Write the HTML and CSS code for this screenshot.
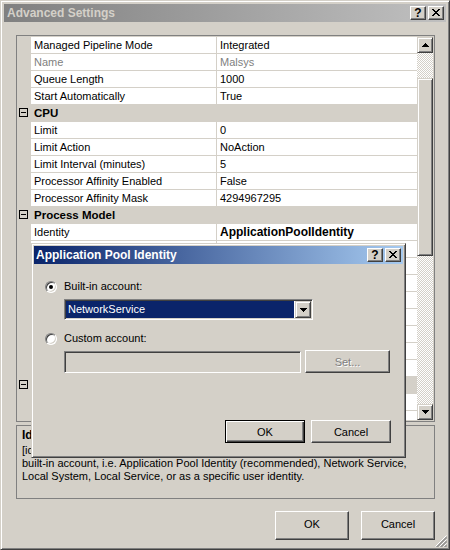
FILE: index.html
```html
<!DOCTYPE html>
<html>
<head>
<meta charset="utf-8">
<title>Advanced Settings</title>
<link rel="stylesheet" href="styles.css">
</head>
<body>
<div class="window">
  <div class="titlebar inactive">
    <span class="title">Advanced Settings</span>
    <div class="caption-btns">
      <span class="cbtn q">?</span>
      <span class="cbtn"><svg width="8" height="7" viewBox="0 0 8 7"><rect x="0" y="0" width="2" height="1"/><rect x="6" y="0" width="2" height="1"/><rect x="1" y="1" width="2" height="1"/><rect x="5" y="1" width="2" height="1"/><rect x="2" y="2" width="4" height="1"/><rect x="3" y="3" width="2" height="1"/><rect x="2" y="4" width="4" height="1"/><rect x="1" y="5" width="2" height="1"/><rect x="5" y="5" width="2" height="1"/><rect x="0" y="6" width="2" height="1"/><rect x="6" y="6" width="2" height="1"/></svg></span>
    </div>
  </div>

  <div class="content">
    <div class="grid">
      <div class="rows">
        <div class="row"><span class="gut"></span><span class="name">Managed Pipeline Mode</span><span class="val">Integrated</span></div>
        <div class="row ro"><span class="gut"></span><span class="name">Name</span><span class="val">Malsys</span></div>
        <div class="row"><span class="gut"></span><span class="name">Queue Length</span><span class="val">1000</span></div>
        <div class="row"><span class="gut"></span><span class="name">Start Automatically</span><span class="val">True</span></div>
        <div class="row cat"><span class="gut"><i class="minus"></i></span><span class="name">CPU</span><span class="val"></span></div>
        <div class="row"><span class="gut"></span><span class="name">Limit</span><span class="val">0</span></div>
        <div class="row"><span class="gut"></span><span class="name">Limit Action</span><span class="val">NoAction</span></div>
        <div class="row"><span class="gut"></span><span class="name">Limit Interval (minutes)</span><span class="val">5</span></div>
        <div class="row"><span class="gut"></span><span class="name">Processor Affinity Enabled</span><span class="val">False</span></div>
        <div class="row"><span class="gut"></span><span class="name">Processor Affinity Mask</span><span class="val">4294967295</span></div>
        <div class="row cat"><span class="gut"><i class="minus"></i></span><span class="name">Process Model</span><span class="val"></span></div>
        <div class="row"><span class="gut"></span><span class="name">Identity</span><span class="val strong">ApplicationPoolIdentity</span></div>
        <div class="row"><span class="gut"></span><span class="name"></span><span class="val"></span></div>
        <div class="row"><span class="gut"></span><span class="name"></span><span class="val"></span></div>
        <div class="row"><span class="gut"></span><span class="name"></span><span class="val"></span></div>
        <div class="row"><span class="gut"></span><span class="name"></span><span class="val"></span></div>
        <div class="row"><span class="gut"></span><span class="name"></span><span class="val"></span></div>
        <div class="row"><span class="gut"></span><span class="name"></span><span class="val"></span></div>
        <div class="row"><span class="gut"></span><span class="name"></span><span class="val"></span></div>
        <div class="row"><span class="gut"></span><span class="name"></span><span class="val"></span></div>
        <div class="row cat"><span class="gut"><i class="minus"></i></span><span class="name"></span><span class="val"></span></div>
        <div class="row"><span class="gut"></span><span class="name"></span><span class="val"></span></div>
        <div class="row"><span class="gut"></span><span class="name"></span><span class="val"></span></div>
      </div>
      <div class="scrollbar">
        <div class="sbtn"><svg width="7" height="4" viewBox="0 0 7 4"><path d="M3 0h1v1h1v1h1v1h1v1H0V3h1V2h1V1h1z"/></svg></div>
        <div class="track t1"></div>
        <div class="thumb"></div>
        <div class="track t2"></div>
        <div class="sbtn"><svg width="7" height="4" viewBox="0 0 7 4"><path d="M0 0h7v1H6v1H5v1H4v1H3V3H2V2H1V1H0z"/></svg></div>
      </div>
    </div>

    <div class="desc">
      <div class="desc-title">Identity</div>
      <div class="desc-text">[identityType, username, password] Configures the application pool to run as<br>built-in account, i.e. Application Pool Identity (recommended), Network Service,<br>Local System, Local Service, or as a specific user identity.</div>
    </div>

    <div class="buttons">
      <button class="btn main-btn">OK</button>
      <button class="btn main-btn">Cancel</button>
    </div>
  </div>

  <div class="grip"><svg width="12" height="12" viewBox="0 0 12 12"><path d="M11.5 0.5L0.5 11.5M11.5 4.5L4.5 11.5M11.5 8.5L8.5 11.5" stroke="#fff" fill="none"/><path d="M12 1.5L1.5 12M12 2.5L2.5 12M12 5.5L5.5 12M12 6.5L6.5 12M12 9.5L9.5 12M12 10.5L10.5 12" stroke="#808080" fill="none"/></svg></div>

  <div class="dialog">
    <div class="titlebar active">
      <span class="title">Application Pool Identity</span>
      <div class="caption-btns">
        <span class="cbtn q">?</span>
        <span class="cbtn"><svg width="8" height="7" viewBox="0 0 8 7"><rect x="0" y="0" width="2" height="1"/><rect x="6" y="0" width="2" height="1"/><rect x="1" y="1" width="2" height="1"/><rect x="5" y="1" width="2" height="1"/><rect x="2" y="2" width="4" height="1"/><rect x="3" y="3" width="2" height="1"/><rect x="2" y="4" width="4" height="1"/><rect x="1" y="5" width="2" height="1"/><rect x="5" y="5" width="2" height="1"/><rect x="0" y="6" width="2" height="1"/><rect x="6" y="6" width="2" height="1"/></svg></span>
      </div>
    </div>
    <div class="dlg-body">
      <label class="radio-row first"><span class="radio checked"></span><span class="rlabel">Built-in account:</span></label>
      <div class="combo">
        <span class="combo-sel">NetworkService</span>
        <span class="combo-btn"><svg width="7" height="4" viewBox="0 0 7 4"><path d="M0 0h7v1H6v1H5v1H4v1H3V3H2V2H1V1H0z"/></svg></span>
      </div>
      <label class="radio-row second"><span class="radio"></span><span class="rlabel">Custom account:</span></label>
      <div class="input-row">
        <span class="textbox"></span>
        <button class="btn set-btn" disabled>Set...</button>
      </div>
      <div class="dlg-buttons">
        <button class="btn dlg-btn default">OK</button>
        <button class="btn dlg-btn">Cancel</button>
      </div>
    </div>
  </div>
</div>
</body>
</html>
```

FILE: styles.css
```css
* { box-sizing: border-box; }
html, body { margin: 0; padding: 0; }
body {
  width: 450px;
  height: 550px;
  overflow: hidden;
  background: #d4d0c8;
  font-family: "Liberation Sans", Arial, sans-serif;
  font-size: 11px;
  color: #000;
}

.window {
  position: relative;
  width: 450px;
  height: 550px;
  background: #d4d0c8;
  border: 1px solid;
  border-color: #d4d0c8 #404040 #404040 #d4d0c8;
  box-shadow: inset 1px 1px #fff, inset -1px -1px #808080;
  padding: 3px;
  display: flex;
  flex-direction: column;
}

/* title bars */
.titlebar {
  height: 18px;
  display: flex;
  align-items: center;
  padding: 0 2px 0 3px;
  flex-shrink: 0;
}
.titlebar.inactive { background: linear-gradient(to right, #808080, #c0c0c0); }
.titlebar.active { background: linear-gradient(to right, #0a246a, #a6caf0); padding-left: 2px; }
.title {
  font-weight: bold;
  font-size: 12px;
  line-height: 18px;
  white-space: nowrap;
}
.inactive .title { color: #d4d0c8; }
.active .title { color: #fff; }
.caption-btns {
  margin-left: auto;
  display: flex;
  gap: 2px;
}
.cbtn {
  width: 16px;
  height: 14px;
  background: #d4d0c8;
  border: 1px solid;
  border-color: #fff #404040 #404040 #fff;
  box-shadow: inset -1px -1px #808080;
  display: flex;
  align-items: center;
  justify-content: center;
  padding-bottom: 1px;
}
.cbtn.q {
  font-weight: bold;
  font-size: 12px;
  line-height: 12px;
  color: #000;
  padding: 0 0 1px 0;
}
.cbtn svg { display: block; fill: #000; }

/* main content */
.content {
  flex: 1;
  display: flex;
  flex-direction: column;
  padding: 13px 11px 0 12px;
}

.grid {
  height: 387px;
  border: 1px solid #808080;
  padding: 1px;
  background: #d4d0c8;
  display: flex;
  flex-shrink: 0;
}
.rows {
  flex: 1;
  overflow: hidden;
}
.row {
  display: grid;
  grid-template-columns: 13px 186px 1fr;
  height: 17px;
  line-height: 16px;
  white-space: nowrap;
}
.row .name, .row .val {
  background: #fff;
  border-bottom: 1px solid #d4d0c8;
  padding-left: 3px;
  overflow: hidden;
}
.row .name { border-right: 1px solid #d4d0c8; }
.row.ro .name, .row.ro .val { color: #808080; }
.val.strong { font-weight: bold; font-size: 12px; }
.row.cat .name, .row.cat .val { background: #d4d0c8; }
.row.cat .name { font-weight: bold; font-size: 11.5px; border-right-color: #d4d0c8; }
.gut { position: relative; }
.minus {
  display: block;
  width: 9px;
  height: 9px;
  border: 1px solid #000;
  margin: 3px 0 0 1px;
  position: relative;
}
.minus::after {
  content: "";
  position: absolute;
  left: 1px;
  top: 3px;
  width: 5px;
  height: 1px;
  background: #000;
}

/* scrollbar */
.scrollbar {
  width: 16px;
  display: flex;
  flex-direction: column;
}
.sbtn, .thumb {
  background: #d4d0c8;
  border: 1px solid;
  border-color: #d4d0c8 #404040 #404040 #d4d0c8;
  box-shadow: inset 1px 1px #fff, inset -1px -1px #808080;
}
.sbtn {
  height: 16px;
  display: flex;
  align-items: center;
  justify-content: center;
}
.sbtn svg { display: block; fill: #000; }
.track {
  background: repeating-conic-gradient(#fff 0 25%, #d4d0c8 0 50%) 0 0 / 2px 2px;
}
.t1 { height: 25px; }
.thumb { height: 178px; }
.t2 { flex: 1; }

/* description */
.desc {
  margin-top: 3px;
  height: 74px;
  border: 1px solid #808080;
  padding: 2px 5px;
  white-space: nowrap;
  overflow: hidden;
}
.desc-title {
  font-weight: bold;
  font-size: 12px;
  line-height: 15px;
}
.desc-text {
  margin-top: 1px;
  line-height: 13px;
}

/* buttons */
.btn {
  font-family: "Liberation Sans", Arial, sans-serif;
  font-size: 11px;
  color: #000;
  background: #d4d0c8;
  border: 1px solid;
  border-color: #fff #404040 #404040 #fff;
  box-shadow: inset -1px -1px #808080;
  padding: 0;
  margin: 0;
}
.buttons {
  margin-top: 12px;
  display: flex;
  justify-content: flex-end;
  gap: 12px;
}
.main-btn {
  width: 74px;
  height: 29px;
  padding-bottom: 3px;
}

.grip {
  position: absolute;
  right: 2px;
  bottom: 2px;
  width: 12px;
  height: 12px;
}
.grip svg { display: block; }

/* dialog */
.dialog {
  position: absolute;
  left: 30px;
  top: 242px;
  width: 375px;
  height: 215px;
  background: #d4d0c8;
  border: 1px solid;
  border-color: #d4d0c8 #404040 #404040 #d4d0c8;
  box-shadow: inset 1px 1px #fff, inset -1px -1px #808080;
  padding: 2px;
  display: flex;
  flex-direction: column;
}
.dlg-body {
  flex: 1;
  display: flex;
  flex-direction: column;
  padding: 0 12px 12px 11px;
}
.radio-row {
  display: flex;
  align-items: center;
  height: 13px;
}
.radio-row.first { margin-top: 16px; }
.radio-row.second { margin-top: 12px; }
.radio {
  width: 12px;
  height: 12px;
  border-radius: 50%;
  border: 1px solid;
  border-color: #808080 #fff #fff #808080;
  box-shadow: inset 1px 1px #404040, inset -1px -1px #d4d0c8;
  background: #fff;
  position: relative;
  flex-shrink: 0;
}
.radio.checked::after {
  content: "";
  position: absolute;
  left: 3px;
  top: 3px;
  width: 4px;
  height: 4px;
  border-radius: 50%;
  background: #000;
}
.rlabel { margin-left: 7px; line-height: 13px; }

.combo {
  margin: 6px 0 0 19px;
  width: 249px;
  height: 21px;
  background: #fff;
  border: 1px solid;
  border-color: #808080 #fff #fff #808080;
  box-shadow: inset 1px 1px #404040, inset -1px -1px #d4d0c8;
  padding: 1px;
  display: flex;
}
.combo-sel {
  flex: 1;
  background: #0a246a;
  color: #fff;
  line-height: 17px;
  padding-left: 2px;
  margin-right: 1px;
}
.combo-btn {
  width: 16px;
  background: #d4d0c8;
  border: 1px solid;
  border-color: #d4d0c8 #404040 #404040 #d4d0c8;
  box-shadow: inset 1px 1px #fff, inset -1px -1px #808080;
  display: flex;
  align-items: center;
  justify-content: center;
}
.combo-btn svg { display: block; fill: #000; }

.input-row {
  margin: 5px 0 0 19px;
  display: flex;
  align-items: center;
  height: 23px;
}
.textbox {
  width: 237px;
  height: 22px;
  background: #d4d0c8;
  border: 1px solid;
  border-color: #808080 #fff #fff #808080;
  box-shadow: inset 1px 1px #404040, inset -1px -1px #d4d0c8;
}
.set-btn {
  margin-left: 4px;
  width: 85px;
  height: 23px;
  color: #808080;
  text-shadow: 1px 1px #fff;
}

.dlg-buttons {
  margin-top: auto;
  display: flex;
  justify-content: flex-end;
  gap: 6px;
}
.dlg-btn {
  width: 80px;
  height: 23px;
}
.dlg-btn.default {
  border-color: #000;
  box-shadow: inset 1px 1px #fff, inset -1px -1px #404040, inset -2px -2px #808080;
}
```
